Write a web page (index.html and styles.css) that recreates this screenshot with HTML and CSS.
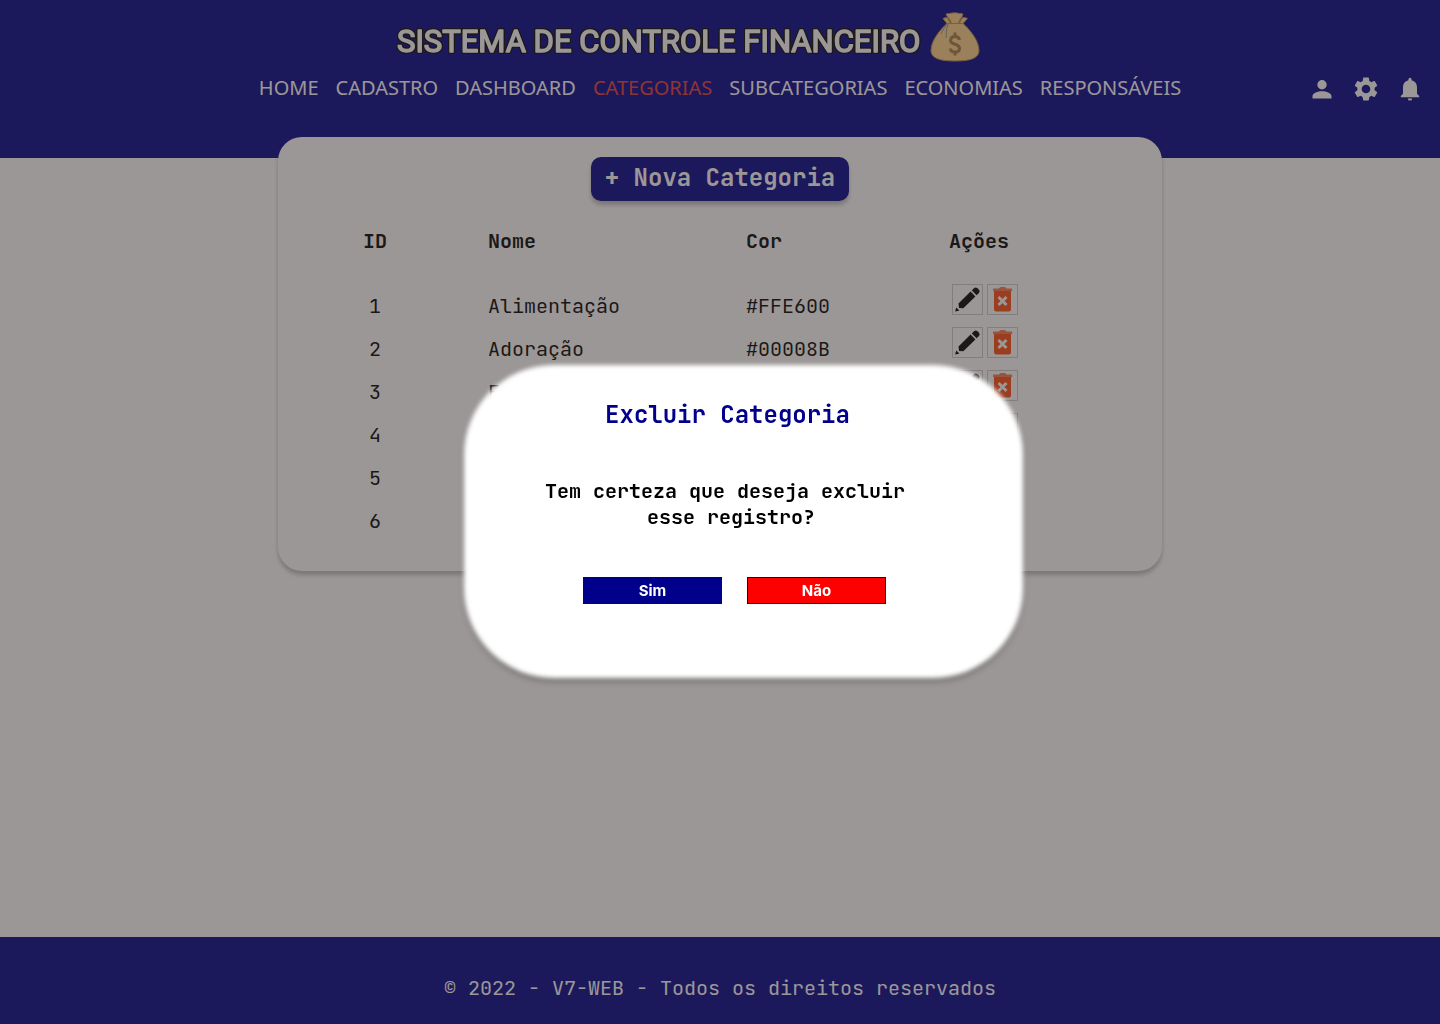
FILE: index.html
```html
<!DOCTYPE html>
<html lang="pt-BR">
<head>
<meta charset="utf-8">
<meta name="viewport" content="width=device-width, initial-scale=1">
<title>Sistema de Controle Financeiro - Categorias</title>
<link rel="stylesheet" href="styles.css">
</head>
<body>
<svg class="sprite" aria-hidden="true">
  <symbol id="pencil" viewBox="0 0 29 29">
    <path d="M5.500 18.500 17.600 6.600 22.400 11.400 10.300 23.300 6 23.100z"/>
    <path d="M18.800 5.400 21.200 3Q22.800 1.800 24.400 3.200L26 4.800Q27.400 6.400 26 8L23.600 10.200z"/>
    <path d="M3.400 22.600 6.400 25.400 2.800 26.600Q2 26.400 2.300 25.500z"/>
  </symbol>
  <symbol id="trash" viewBox="0 0 29 29">
    <path class="trash-body" d="M6 6H23V24Q23 26.500 20.500 26.500H8.500Q6 26.500 6 24z"/>
    <path class="trash-lid" d="M5.500 3.500H11Q11.500 2 13 2H16.500Q18 2 18.500 3.500H23.500Q24.200 3.500 24.200 4.500V6H5V4.500Q5 3.500 5.500 3.500z"/>
    <path class="trash-cross" d="M10.500 12 18.500 20M18.500 12 10.500 20"/>
  </symbol>
</svg>

<header class="header">
  <div class="brand">
    <h1 class="brand-title">
      <svg class="brand-name" viewBox="0 0 521 40"><text x="0" y="30">SISTEMA DE CONTROLE FINANCEIRO</text></svg>
    </h1>
    <svg class="brand-logo" viewBox="0 0 50 50" aria-hidden="true">
      <path class="bag" d="M17 11.500 13 6.500Q16 5 18 6L16 2Q25-.5 33 2L31.500 6Q35 5 37.500 6.500L33 11.500C39 17 49 28 49 38.500 49 46 41 49 25 49S1 46 1 38.500C1 28 11 17 17 11.500z"/>
      <path class="bag-fold" d="M18 6 21 11M31.500 6 29 11"/>
      <path class="bag-string" d="M16.500 11.500H33.500M18 12Q16 17 16 26M17 12Q13 17 11 22"/>
      <path class="bag-sign" d="M29.500 28Q29 24.500 25 24.500T20.500 28.500Q20.500 31 25 32.200T29.500 36.500Q29.500 40 25 40T20.500 36.500M25 20.500V25M25 40V43.500"/>
    </svg>
  </div>
  <div class="bar">
    <nav class="nav" aria-label="Principal">
      <a href="#">HOME</a>
      <a href="#">CADASTRO</a>
      <a href="#">DASHBOARD</a>
      <a href="#" class="active" aria-current="page">CATEGORIAS</a>
      <a href="#">SUBCATEGORIAS</a>
      <a href="#">ECONOMIAS</a>
      <a href="#">RESPONSÁVEIS</a>
    </nav>
    <div class="tools">
      <button type="button" class="tool" aria-label="Perfil"><svg viewBox="0 0 24 24"><path d="M12 3a4.700 4.700 0 1 1 0 9.400A4.700 4.700 0 0 1 12 3zM2.500 21.500v-2.300c0-3 5.500-4.900 9.500-4.900s9.500 1.900 9.500 4.900v2.300z"/></svg></button>
      <button type="button" class="tool" aria-label="Configurações"><svg viewBox="2 2 20 20"><path d="M19.140 12.940c.04-.3.060-.61.060-.94 0-.32-.02-.64-.07-.94l2.030-1.580c.18-.14.230-.41.120-.61l-1.920-3.320c-.12-.22-.37-.29-.59-.22l-2.390.960c-.5-.38-1.030-.7-1.620-.94l-.36-2.540c-.04-.24-.24-.41-.48-.41h-3.840c-.24 0-.43.170-.47.410l-.36 2.540c-.59.240-1.130.570-1.620.940l-2.390-.96c-.22-.08-.47 0-.59.220L2.740 8.870c-.12.210-.08.470.120.610l2.030 1.580c-.05.300-.09.630-.09.940s.020.640.070.940l-2.030 1.580c-.18.140-.23.410-.12.610l1.920 3.320c.120.220.370.290.590.220l2.390-.96c.5.380 1.030.7 1.620.940l.36 2.540c.05.240.240.410.480.410h3.840c.240 0 .440-.17.470-.41l.36-2.540c.590-.24 1.130-.56 1.620-.94l2.390.960c.220.080.470 0 .590-.22l1.920-3.320c.120-.22.070-.47-.12-.61zM12 15.600A3.600 3.600 0 1 1 12 8.400a3.600 3.600 0 0 1 0 7.200z"/></svg></button>
      <button type="button" class="tool" aria-label="Notificações"><svg viewBox="0 0 24 24"><path d="M12 .8a1.600 1.600 0 0 0-1.600 1.600v.8C7 4 5 6.900 5 10.400v6.300l-2.200 2.200v1.300h18.400v-1.300L19 16.700v-6.300C19 6.900 17 4 13.600 3.200v-.8A1.600 1.600 0 0 0 12 .8zM9.800 21.400h4.400a2.200 2.200 0 0 1-4.400 0z"/></svg></button>
    </div>
  </div>
</header>

<main class="main">
  <section class="card">
    <button type="button" class="new-button">+ Nova Categoria</button>
    <table class="table">
      <colgroup><col class="col-id"><col class="col-name"><col class="col-color"><col></colgroup>
      <thead>
        <tr><th scope="col">ID</th><th scope="col">Nome</th><th scope="col">Cor</th><th scope="col">Ações</th></tr>
      </thead>
      <tbody>
        <tr><td>1</td><td>Alimentação</td><td>#FFE600</td><td><div class="actions"><button type="button" aria-label="Editar"><svg><use href="#pencil"/></svg></button><button type="button" aria-label="Excluir"><svg><use href="#trash"/></svg></button></div></td></tr>
        <tr><td>2</td><td>Adoração</td><td>#00008B</td><td><div class="actions"><button type="button" aria-label="Editar"><svg><use href="#pencil"/></svg></button><button type="button" aria-label="Excluir"><svg><use href="#trash"/></svg></button></div></td></tr>
        <tr><td>3</td><td>E</td><td></td><td><div class="actions"><button type="button" aria-label="Editar"><svg><use href="#pencil"/></svg></button><button type="button" aria-label="Excluir"><svg><use href="#trash"/></svg></button></div></td></tr>
        <tr><td>4</td><td></td><td></td><td><div class="actions"><button type="button" aria-label="Editar"><svg><use href="#pencil"/></svg></button><button type="button" aria-label="Excluir"><svg><use href="#trash"/></svg></button></div></td></tr>
        <tr><td>5</td><td></td><td></td><td></td></tr>
        <tr><td>6</td><td></td><td></td><td></td></tr>
      </tbody>
    </table>
  </section>
</main>

<footer class="footer">© 2022 - V7-WEB - Todos os direitos reservados</footer>

<div class="overlay">
  <div class="modal" role="dialog" aria-modal="true" aria-labelledby="modal-title">
    <h2 class="modal-title" id="modal-title">Excluir Categoria</h2>
    <p class="modal-text">Tem certeza que deseja excluir<br>&nbsp;esse registro?</p>
    <div class="modal-actions">
      <button type="button" class="yes">Sim</button>
      <button type="button" class="no">Não</button>
    </div>
  </div>
</div>
</body>
</html>
```
FILE: styles.css
```css
* {
  box-sizing: border-box;
}

body {
  margin: 0;
  min-height: 100vh;
  display: flex;
  flex-direction: column;
  background: #fff;
  color: #000;
  font: 20px/26px "JetBrains Mono", "DejaVu Sans Mono", monospace;
}

button {
  font: inherit;
  cursor: pointer;
}

.sprite {
  position: absolute;
  width: 0;
  height: 0;
}

.header {
  height: 158px;
  padding-top: 12px;
  background: #00008b;
  color: #fff;
}

.brand {
  display: flex;
  justify-content: center;
  align-items: center;
  gap: 12px;
  padding-right: 64px;
}

.brand-title {
  margin: 0;
  padding-top: 10px;
}

/* Stroked letters with round joins give the title its soft corners. */
.brand-name {
  display: block;
  width: 521px;
  height: 40px;
  overflow: visible;
  fill: #fff;
  stroke: #fff;
  stroke-width: 1.5;
  stroke-linejoin: round;
  font: 400 31px Roboto, sans-serif;
  filter: drop-shadow(1px 0 0 #000) drop-shadow(-1px 0 0 #000) drop-shadow(0 1px 0 #000) drop-shadow(0 -1px 0 #000);
}

.brand-logo {
  width: 50px;
  height: 50px;
}

.bag {
  fill: #ffd18a;
  stroke: #b98c42;
}

.bag-fold {
  fill: none;
  stroke: #b98c42;
  stroke-width: 2;
}

.bag-string {
  fill: none;
  stroke: #8a98a8;
}

.bag-sign {
  fill: none;
  stroke: #a87c42;
  stroke-width: 3;
}

.bar {
  display: grid;
  grid-template-columns: 1fr auto 1fr;
  align-items: center;
  padding: 12px 18px 0;
}

.nav {
  grid-column: 2;
  display: flex;
  gap: 17px;
  font: 20px/28px "Noto Sans", sans-serif;
}

.nav a {
  color: #fff;
  text-decoration: none;
}

.nav .active {
  color: #e43a34;
}

.tools {
  display: flex;
  justify-content: flex-end;
  gap: 20px;
  padding-top: 2px;
}

.tool {
  width: 24px;
  height: 24px;
  padding: 0;
  border: 0;
  background: none;
}

.tool svg {
  display: block;
  width: 24px;
  height: 24px;
  fill: #fff;
}

.main {
  flex: 1;
  padding: 0 16px;
}

.card {
  max-width: 884px;
  margin: -21px auto 0;
  padding: 20px 0 29px;
  border-radius: 24px;
  background: #fff;
  box-shadow: 0 4px 4px rgba(0, 0, 0, .25);
}

.new-button {
  display: block;
  height: 44px;
  margin: 0 auto;
  padding: 0 14px 2px;
  border: 0;
  border-radius: 10px;
  background: #00008b;
  color: #fff;
  font-size: 24px;
  font-weight: 700;
  box-shadow: 0 4px 4px rgba(0, 0, 0, .25);
}

.table {
  width: 100%;
  margin-top: 18px;
  border-collapse: collapse;
  table-layout: fixed;
}

.col-id {
  width: 210px;
}

.col-name {
  width: 258px;
}

.col-color {
  width: 203px;
}

.table th {
  height: 44px;
  padding: 0;
  text-align: left;
}

.table thead::after {
  content: "";
  display: block;
  height: 21px;
}

.table td {
  height: 43px;
  padding: 0;
}

.table th:first-child,
.table td:first-child {
  padding-right: 16px;
  text-align: center;
}

.actions {
  display: flex;
  gap: 4px;
  padding: 0 0 12px 3px;
}

.actions button {
  width: 31px;
  height: 31px;
  padding: 0;
  border: 1px solid #ccc;
  background: none;
}

.actions svg {
  display: block;
  width: 29px;
  height: 29px;
}

.trash-body {
  fill: #ff4a10;
}

.trash-lid {
  fill: #ff7550;
}

.trash-cross {
  fill: none;
  stroke: #fff;
  stroke-width: 3;
}

.footer {
  height: 87px;
  padding-top: 38px;
  background: #00008b;
  color: #fff;
  text-align: center;
}

.overlay {
  position: fixed;
  inset: 0;
  display: flex;
  justify-content: center;
  align-items: center;
  padding: 19px 0 0 47px;
  background: rgba(56, 48, 46, .5);
}

.modal {
  position: relative;
  width: 559px;
  min-height: 313px;
  padding: 35px 0 73px;
  text-align: center;
}

.modal::before {
  content: "";
  position: absolute;
  inset: 0;
  z-index: -1;
  border-radius: 90px;
  background: #fff;
  box-shadow: 0 4px 4px rgba(0, 0, 0, .25);
  filter: blur(2px);
}

.modal-title {
  margin: 0 32px 0 0;
  color: #00008b;
  font-size: 24px;
  line-height: 30px;
}

.modal-text {
  margin: 48px 37px 0 0;
  font-weight: 700;
}

.modal-actions {
  display: flex;
  justify-content: center;
  gap: 25px;
  margin: 47px 18px 0 0;
}

.modal-actions button {
  width: 139px;
  height: 27px;
  padding: 0;
  border: 1px solid #00008b;
  color: #fff;
  font: 700 15px/18px Inter, sans-serif;
}

.yes {
  background: #00008b;
}

.no {
  background: #f00;
}
```
